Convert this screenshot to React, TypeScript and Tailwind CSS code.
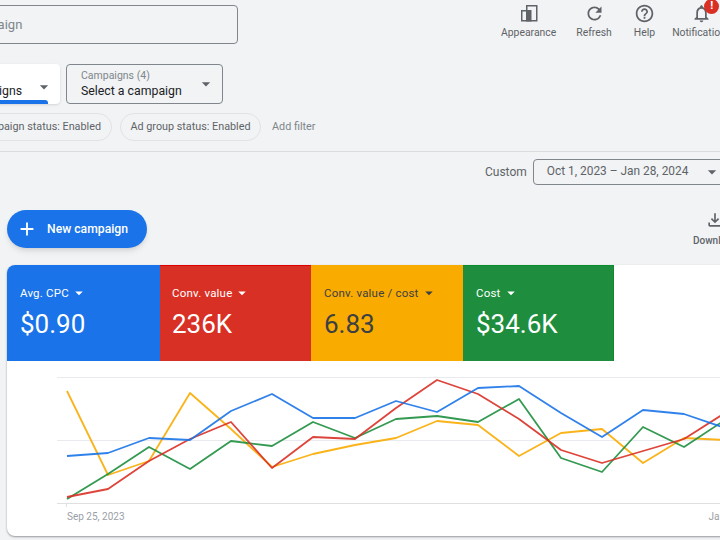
import { MdRefresh, MdHelpOutline, MdNotificationsNone, MdOutlineFileDownload, MdArrowDropDown, MdAdd } from 'react-icons/md';

const xs = [67, 108, 149, 190, 231, 272, 313, 355, 396, 437, 478, 519, 561, 602, 643, 684, 725];

const series = [
  { color: '#f9ab00', ys: [391, 475, 461, 393, 429, 467, 454, 445, 438, 421, 425, 456, 433, 429, 463, 438, 440] },
  { color: '#1e8e3e', ys: [499, 474, 447, 469, 441, 446, 422, 438, 419, 416, 422, 399, 458, 472, 427, 447, 420] },
  { color: '#d93025', ys: [497, 489, 461, 439, 422, 468, 437, 439, 408, 380, 394, 419, 450, 463, 451, 439, 413] },
  { color: '#1a73e8', ys: [456, 453, 438, 440, 411, 394, 418, 418, 401, 412, 388, 386, 413, 437, 410, 414, 428] },
];

const tiles = [
  { label: 'Avg. CPC', value: '$0.90', box: 'w-[153px] pl-[13px] pt-[19px] bg-[#1a73e8] text-white rounded-tl-lg' },
  { label: 'Conv. value', value: '236K', box: 'w-[151px] pl-[12px] pt-[18px] bg-[#d93025] border-t border-[#e00000] text-white' },
  { label: 'Conv. value / cost', value: '6.83', box: 'w-[152px] pl-[13px] pt-[19px] bg-[#f9ab00] text-[#3c4043]' },
  { label: 'Cost', value: '$34.6K', box: 'w-[151px] pl-[13px] pt-[18px] bg-[#1e8e3e] border-t border-r border-[#0b8c2c] text-white' },
];

function ToolbarItem({ icon, label, className }: { icon: React.ReactNode; label: string; className: string }) {
  return (
    <div className={`flex flex-col items-center shrink-0 text-[10.4px] leading-[14px] text-[#5f6368] whitespace-nowrap ${className}`}>
      <div className="h-[26px] flex items-center justify-center text-[#5f6368]">{icon}</div>
      <span>{label}</span>
    </div>
  );
}

function AppearanceIcon() {
  return (
    <svg width="20" height="20" viewBox="0 0 20 20" fill="none">
      <rect x="7.75" y="2.75" width="10" height="15" stroke="#5f6368" strokeWidth="1.5" />
      <rect x="2.75" y="7.75" width="9" height="10" stroke="#5f6368" strokeWidth="1.5" />
      <rect x="8" y="8" width="4" height="10" fill="#5f6368" />
    </svg>
  );
}

function Chart() {
  return (
    <svg width="713" height="140" viewBox="0 0 713 140" className="block">
      <g transform="translate(-7 -370)">
        <line x1="57" x2="720" y1="377.5" y2="377.5" stroke="#e8eaed" />
        <line x1="57" x2="720" y1="440.5" y2="440.5" stroke="#e8eaed" />
        <line x1="57" x2="720" y1="503.5" y2="503.5" stroke="#e0e0e0" />
        <line x1="66.5" x2="66.5" y1="503" y2="507" stroke="#e0e0e0" />
        {series.map(s => (
          <polyline
            key={s.color}
            points={s.ys.map((y, i) => `${xs[i]},${y}`).join(' ')}
            fill="none"
            stroke={s.color}
            strokeOpacity="0.9"
            strokeWidth="1.8"
            strokeLinejoin="round"
          />
        ))}
      </g>
    </svg>
  );
}

export default function App() {
  return (
    <div className="w-[720px] h-[540px] overflow-hidden bg-[#f1f3f4] font-['Roboto',sans-serif]">
      {/* Top bar */}
      <div className="flex items-start h-[64px]">
        <div className="shrink-0 ml-[-139px] mt-[5px] w-[377px] h-[39px] border border-[#80868b] rounded flex items-center pl-[30px] text-[13px] text-[#80868b]">
          Search for a campaign
        </div>
        <ToolbarItem className="ml-[263px]" label="Appearance" icon={<AppearanceIcon />} />
        <ToolbarItem className="ml-[20px]" label="Refresh" icon={<MdRefresh size={21} />} />
        <ToolbarItem className="ml-[22px]" label="Help" icon={<MdHelpOutline size={21} />} />
        <div className="relative shrink-0 ml-[17px]">
          <ToolbarItem className="" label="Notifications" icon={<MdNotificationsNone size={21} />} />
          <div className="absolute top-[-1px] left-[32px] w-[15px] h-[15px] rounded-full bg-[#d93025] text-white text-[11px] font-bold flex items-center justify-center">!</div>
        </div>
      </div>

      {/* Selectors */}
      <div className="flex items-start gap-[6px] h-[49px]">
        <div className="shrink-0 ml-[-56px] w-[116px] h-[40px] bg-white rounded shadow flex flex-col">
          <div className="flex-1 flex items-end justify-between pl-[16px] pr-[6px] text-[12.3px] leading-[16px] text-[#202124]">
            <span className="mb-[1px]">Campaigns</span>
            <MdArrowDropDown size={20} className="text-[#5f6368] mb-[3px]" />
          </div>
          <div className="h-[4px] w-[104px] bg-[#1a73e8] rounded-tr-[3px]" />
        </div>
        <div className="shrink-0 w-[157px] h-[40px] border border-[#80868b] rounded flex items-center justify-between pl-[14px] pr-[6px]">
          <div className="flex flex-col">
            <span className="text-[10.5px] leading-[14px] text-[#80868b]">Campaigns (4)</span>
            <span className="text-[12.3px] leading-[16px] text-[#202124]">Select a campaign</span>
          </div>
          <MdArrowDropDown size={20} className="text-[#5f6368]" />
        </div>
      </div>

      {/* Filter chips */}
      <div className="flex items-center gap-[8px] h-[28px] text-[10.8px] text-[#5f6368]">
        <div className="shrink-0 ml-[-33px] h-[28px] w-[145px] pr-[10px] pt-px border border-[#e0e2e4] rounded-full flex items-center justify-end">
          Campaign status: Enabled
        </div>
        <div className="shrink-0 h-[28px] w-[141px] pt-px border border-[#e0e2e4] rounded-full flex items-center justify-center">
          Ad group status: Enabled
        </div>
        <span className="ml-[3px] pt-px text-[#80868b]">Add filter</span>
      </div>

      <div className="mt-[10px] h-px bg-[#dadce0]" />

      {/* Date range */}
      <div className="mt-[7px] flex items-center h-[26px]">
        <span className="ml-[485px] text-[12px] text-[#5f6368]">Custom</span>
        <div className="shrink-0 ml-[6px] w-[200px] h-[26px] border border-[#80868b] rounded flex items-center justify-between pl-[13px] pr-[10px] text-[11.9px] text-[#5f6368]">
          <span>Oct 1, 2023 – Jan 28, 2024</span>
          <MdArrowDropDown size={20} className="text-[#5f6368]" />
        </div>
      </div>

      {/* Actions */}
      <div className="mt-[25px] flex items-start h-[55px]">
        <button className="shrink-0 ml-[7px] w-[140px] h-[38px] rounded-full bg-[#1a73e8] text-white shadow-md flex items-center pl-[9px] text-[12.2px] font-medium">
          <MdAdd size={22} className="mr-[9px]" />
          New campaign
        </button>
        <div className="shrink-0 ml-[546px] flex flex-col items-center text-[10px] leading-[14px] font-medium text-[#5f6368]">
          <MdOutlineFileDownload size={20} />
          <span className="mt-[4px]">Download</span>
        </div>
      </div>

      {/* Performance card */}
      <div className="ml-[7px] w-[760px] h-[271px] bg-white rounded-lg shadow-[0_1px_2px_rgba(60,64,67,0.5)]">
        <div className="flex h-[96px]">
          {tiles.map(t => (
            <div key={t.label} className={`${t.box} shrink-0`}>
              <div className="flex items-center text-[11.5px] leading-[16px] tracking-[0.2px]">
                {t.label}
                <MdArrowDropDown size={18} className="ml-[1px]" />
              </div>
              <div className="mt-[6px] text-[26px] leading-[32px]">{t.value}</div>
            </div>
          ))}
        </div>
        <div className="mt-[9px]">
          <Chart />
        </div>
        <div className="flex text-[10px] leading-[14px] text-[#9aa0a6] whitespace-nowrap">
          <span className="shrink-0 ml-[60px]">Sep 25, 2023</span>
          <span className="shrink-0 ml-[584px]">Jan 28, 2024</span>
        </div>
      </div>
    </div>
  );
}
